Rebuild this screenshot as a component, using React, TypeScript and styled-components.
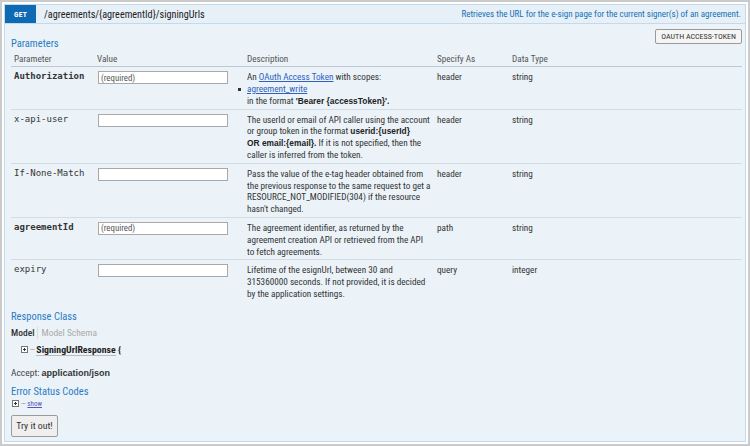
import React from "react";
import styled, { createGlobalStyle, css } from "styled-components";

const sans = css`
  font-family: Roboto, "Open Sans", sans-serif;
  font-stretch: 75%;
`;

const Global = createGlobalStyle`
  html, body { margin: 0; padding: 0; background: #fff; }
  body { font-family: Roboto, "Open Sans", sans-serif; font-stretch: 75%; color: #333; }
  * { box-sizing: border-box; }
`;

const Frame = styled.div`
  width: 750px;
  height: 446px;
  border: 2px solid #cbcbcb;
  padding: 2px;
  background: #fff;
  display: flex;
  flex-direction: column;
`;

const Heading = styled.div`
  height: 20px;
  display: flex;
  align-items: center;
  background: #e7f0f7;
  border: 1px solid #c3d9ec;
  padding-right: 4px;
`;

const Method = styled.span`
  width: 31px;
  height: 18px;
  background: #0f6ab4;
  color: #fff;
  font-size: 7.5px;
  font-weight: 700;
  display: flex;
  align-items: center;
  justify-content: center;
  letter-spacing: 0.3px;
`;

const Path = styled.span`
  margin-left: 8px;
  font-size: 10.2px;
  color: #222;
`;

const Summary = styled.span`
  margin-left: auto;
  font-size: 9px;
  color: #1470b8;
`;

const Content = styled.div`
  flex: 1;
  background: #ebf3f9;
  border: 1px solid #c3d9ec;
  border-top: none;
  padding: 0 3px 0 6px;
  display: flex;
  flex-direction: column;
  align-items: flex-start;
`;

const TopRow = styled.div`
  align-self: stretch;
  display: flex;
  justify-content: space-between;
  align-items: flex-start;
  margin-top: 5px;
`;

const SectionTitle = styled.h4<{ $mt: number }>`
  margin: ${(p) => p.$mt}px 0 0 0;
  font-size: 10.5px;
  line-height: 12px;
  font-weight: 400;
  color: #2a7bc4;
`;

const TokenButton = styled.button`
  ${sans};
  height: 15px;
  padding: 0 5px;
  font-size: 8px;
  color: #333;
  background: #f5f5f5;
  border: 1px solid #9a9a9a;
  border-radius: 2px;
  line-height: 13px;
`;

const Table = styled.table`
  align-self: stretch;
  border-collapse: collapse;
  table-layout: fixed;
  width: 100%;
  font-size: 9.2px;
`;

const Th = styled.th<{ $w?: number }>`
  width: ${(p) => (p.$w ? `${p.$w}px` : "auto")};
  text-align: left;
  font-weight: 400;
  color: #555;
  padding: 3px 3px 2px;
  line-height: 11px;
  border-bottom: 1px solid #bfc8d2;
`;

const Tr = styled.tr<{ $last?: boolean }>`
  border-bottom: ${(p) => (p.$last ? "none" : "1px solid #d3dbe3")};
`;

const Td = styled.td`
  vertical-align: top;
  padding: 4px 3px 2px;
  line-height: 11.8px;
  color: #333;
`;

const NameCell = styled(Td)<{ $required?: boolean }>`
  font-family: "DejaVu Sans Mono", monospace;
  font-stretch: normal;
  font-size: 9px;
  font-weight: ${(p) => (p.$required ? 700 : 400)};
  color: #333;
`;

const DescCell = styled(Td)`
  font-size: 9.2px;
`;

const DescLine = styled.div`
  white-space: nowrap;
`;

const Input = styled.input`
  ${sans};
  display: block;
  width: 130px;
  height: 13px;
  margin: 0 0 0 1px;
  padding: 0 2px;
  border: 1px solid #a9a9a9;
  background: #fff;
  font-size: 8.8px;
  &::placeholder { color: #555; }
`;

const Link = styled.a<{ $visited?: boolean }>`
  color: ${(p) => (p.$visited ? "#5a55b8" : "#2f5fc0")};
  text-decoration: underline;
`;

const Scopes = styled.ul`
  margin: 0;
  padding: 0;
  list-style: none;
`;

const Scope = styled.li`
  line-height: 12px;
  &::before {
    content: "";
    display: inline-block;
    width: 3px;
    height: 3px;
    background: #333;
    margin: 0 6px 0 -9px;
    vertical-align: middle;
  }
`;

const Strong = styled.b`
  font-family: "Liberation Sans", Arial, sans-serif;
  font-stretch: normal;
  font-size: 8.4px;
  line-height: 1;
  font-weight: 700;
  color: #222;
`;

const ModelTabs = styled.div`
  margin-top: 4px;
  display: flex;
  align-items: center;
  font-size: 9.5px;
  line-height: 12px;
`;

const Tab = styled.span<{ $active?: boolean }>`
  color: ${(p) => (p.$active ? "#333" : "#aaa")};
  font-weight: ${(p) => (p.$active ? 500 : 400)};
  padding: ${(p) => (p.$active ? "0 3px 0 0" : "0 0 0 3px")};
  & + & { border-left: 1px solid #d5dde5; }
`;

const TreeLine = styled.div<{ $mt: number; $ml: number; $size: number }>`
  margin: ${(p) => p.$mt}px 0 0 ${(p) => p.$ml}px;
  display: flex;
  align-items: center;
  gap: 2px;
  font-size: ${(p) => p.$size}px;
  line-height: 12px;
`;

const Dots = styled.span`
  color: #555;
  font-size: 8px;
  letter-spacing: -0.5px;
`;

const ModelName = styled.span`
  font-weight: 700;
  color: #222;
  font-size: 9.8px;
`;

const Underlined = styled.span`
  border-bottom: 1px solid #bbb;
`;

const Accept = styled.div`
  margin-top: 11px;
  font-size: 9.5px;
  line-height: 12px;
  color: #444;
`;

const AcceptValue = styled.b`
  font-family: "Liberation Sans", Arial, sans-serif;
  font-stretch: normal;
  font-size: 9px;
  line-height: 1;
  color: #333;
`;

const TryButton = styled.button`
  ${sans};
  margin-top: 5px;
  width: 47px;
  height: 22px;
  padding: 0;
  font-size: 9.8px;
  color: #333;
  background: #efefef;
  border: 1px solid #9c9c9c;
  border-radius: 2px;
`;

const PlusBox = () => (
  <svg width="7" height="7" viewBox="0 0 7 7">
    <rect x="0.5" y="0.5" width="6" height="6" fill="#fff" stroke="#777" />
    <path d="M2 3.5h3M3.5 2v3" stroke="#333" strokeWidth="1" />
  </svg>
);

type Param = {
  name: string;
  required?: boolean;
  desc: React.ReactNode[];
  loc: string;
  type: string;
};

const params: Param[] = [
  {
    name: "Authorization",
    required: true,
    desc: [
      <>
        An <Link href="#">OAuth Access Token</Link> with scopes:
      </>,
      <Scopes>
        <Scope>
          <Link href="#">agreement_write</Link>
        </Scope>
      </Scopes>,
      <>
        in the format <Strong>'Bearer {"{accessToken}"}'.</Strong>
      </>,
    ],
    loc: "header",
    type: "string",
  },
  {
    name: "x-api-user",
    desc: [
      "The userId or email of API caller using the account",
      <>
        or group token in the format <Strong>userid:{"{userId}"}</Strong>
      </>,
      <>
        <Strong>OR email:{"{email}"}.</Strong> If it is not specified, then the
      </>,
      "caller is inferred from the token.",
    ],
    loc: "header",
    type: "string",
  },
  {
    name: "If-None-Match",
    desc: [
      "Pass the value of the e-tag header obtained from",
      "the previous response to the same request to get a",
      "RESOURCE_NOT_MODIFIED(304) if the resource",
      "hasn't changed.",
    ],
    loc: "header",
    type: "string",
  },
  {
    name: "agreementId",
    required: true,
    desc: [
      "The agreement identifier, as returned by the",
      "agreement creation API or retrieved from the API",
      "to fetch agreements.",
    ],
    loc: "path",
    type: "string",
  },
  {
    name: "expiry",
    desc: [
      "Lifetime of the esignUrl, between 30 and",
      "315360000 seconds. If not provided, it is decided",
      "by the application settings.",
    ],
    loc: "query",
    type: "integer",
  },
];

export default function App() {
  return (
    <>
      <Global />
      <Frame>
        <Heading>
          <Method>GET</Method>
          <Path>/agreements/{"{agreementId}"}/signingUrls</Path>
          <Summary>
            Retrieves the URL for the e-sign page for the current signer(s) of an agreement.
          </Summary>
        </Heading>
        <Content>
          <TopRow>
            <SectionTitle $mt={9}>Parameters</SectionTitle>
            <TokenButton>OAUTH ACCESS-TOKEN</TokenButton>
          </TopRow>
          <Table>
            <thead>
              <tr>
                <Th $w={83}>Parameter</Th>
                <Th $w={150}>Value</Th>
                <Th $w={190}>Description</Th>
                <Th $w={75}>Specify As</Th>
                <Th>Data Type</Th>
              </tr>
            </thead>
            <tbody>
              {params.map((p, i) => (
                <Tr key={p.name} $last={i === params.length - 1}>
                  <NameCell $required={p.required}>{p.name}</NameCell>
                  <Td>
                    <Input placeholder={p.required ? "(required)" : ""} />
                  </Td>
                  <DescCell>
                    {p.desc.map((line, j) => (
                      <DescLine key={j}>{line}</DescLine>
                    ))}
                  </DescCell>
                  <Td>{p.loc}</Td>
                  <Td>{p.type}</Td>
                </Tr>
              ))}
            </tbody>
          </Table>
          <SectionTitle $mt={9}>Response Class</SectionTitle>
          <ModelTabs>
            <Tab $active>Model</Tab>
            <Tab>Model Schema</Tab>
          </ModelTabs>
          <TreeLine $mt={5} $ml={10} $size={9.5}>
            <PlusBox />
            <Dots>···</Dots>
            <ModelName>
              <Underlined>SigningUrlResponse</Underlined> {"{"}
            </ModelName>
          </TreeLine>
          <Accept>
            Accept: <AcceptValue>application/json</AcceptValue>
          </Accept>
          <SectionTitle $mt={7}>Error Status Codes</SectionTitle>
          <TreeLine $mt={0} $ml={1} $size={7}>
            <PlusBox />
            <Dots>···</Dots>
            <Link href="#" $visited>
              show
            </Link>
          </TreeLine>
          <TryButton>Try it out!</TryButton>
        </Content>
      </Frame>
    </>
  );
}
